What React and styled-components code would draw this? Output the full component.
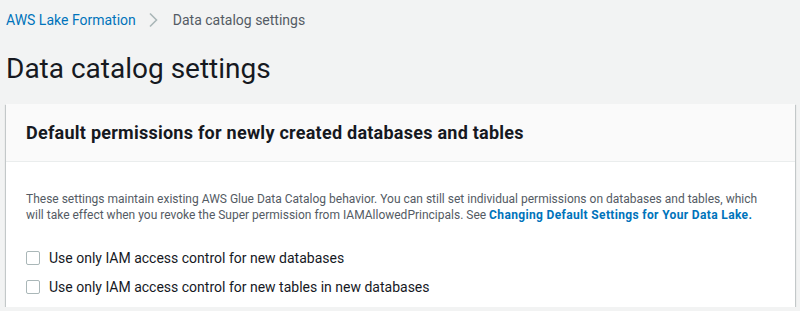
import styled, { createGlobalStyle } from "styled-components";

const GlobalStyle = createGlobalStyle`
  html, body {
    margin: 0;
    padding: 0;
    background: #f2f3f3;
    font-family: Roboto, "Noto Sans", Arial, sans-serif;
    color: #16191f;
  }
`;

export default function App() {
  return (
    <Page>
      <GlobalStyle />
      <Breadcrumbs>
        <CrumbLink href="#">AWS Lake Formation</CrumbLink>
        <Chevron viewBox="0 0 10 16" aria-hidden="true">
          <path d="M2 1.5 L8.5 8 L2 14.5" fill="none" stroke="#aab7b8" strokeWidth="1.6" />
        </Chevron>
        <CrumbCurrent>Data catalog settings</CrumbCurrent>
      </Breadcrumbs>
      <Title>Data catalog settings</Title>
      <Card>
        <CardHeader>
          <CardTitle>Default permissions for newly created databases and tables</CardTitle>
        </CardHeader>
        <CardBody>
          <Description>
            These settings maintain existing AWS Glue Data Catalog behavior. You can still set individual
            permissions on databases and tables, which will take effect when you revoke the Super permission
            from IAMAllowedPrincipals. See <DocLink href="#">Changing Default Settings for Your Data Lake.</DocLink>
          </Description>
          <Options>
            <Option>
              <Box type="checkbox" />
              <span>Use only IAM access control for new databases</span>
            </Option>
            <Option>
              <Box type="checkbox" />
              <span>Use only IAM access control for new tables in new databases</span>
            </Option>
          </Options>
        </CardBody>
      </Card>
    </Page>
  );
}

const Page = styled.div`
  padding: 8px 5px 0 6px;
`;

const Breadcrumbs = styled.nav`
  display: flex;
  align-items: center;
  height: 24px;
  font-size: 14px;
`;

const CrumbLink = styled.a`
  color: #0073bb;
  text-decoration: none;
`;

const Chevron = styled.svg`
  width: 10px;
  height: 16px;
  margin: 0 15px 0 12px;
`;

const CrumbCurrent = styled.span`
  color: #545b64;
`;

const Title = styled.h1`
  margin: 17px 0 0;
  font-size: 28px;
  font-weight: 400;
  line-height: 40px;
  color: #16191f;
`;

const Card = styled.section`
  margin-top: 15px;
  background: #fff;
  box-shadow: 0 1px 1px 0 rgba(0, 28, 36, 0.3), 1px 1px 1px 0 rgba(0, 28, 36, 0.15),
    -1px 1px 1px 0 rgba(0, 28, 36, 0.15);
`;

const CardHeader = styled.div`
  background: #fafafa;
  border-bottom: 1px solid #eaeded;
  height: 57px;
  display: flex;
  align-items: center;
  padding: 0 20px;
`;

const CardTitle = styled.h2`
  margin: 0;
  font-size: 18px;
  font-weight: 700;
  letter-spacing: 0.25px;
  color: #16191f;
`;

const CardBody = styled.div`
  padding: 29px 20px 10px;
`;

const Description = styled.p`
  margin: 0;
  font-size: 12px;
  line-height: 16px;
  color: #545b64;
`;

const DocLink = styled.a`
  color: #0073bb;
  font-weight: 700;
  letter-spacing: 0.35px;
  text-decoration: none;
`;

const Options = styled.div`
  margin-top: 25px;
  display: flex;
  flex-direction: column;
  gap: 9px;
`;

const Option = styled.label`
  display: flex;
  align-items: center;
  gap: 9px;
  font-size: 14px;
  line-height: 20px;
  color: #16191f;
`;

const Box = styled.input`
  appearance: none;
  margin: 0;
  width: 14px;
  height: 14px;
  border: 1px solid #aab7b8;
  border-radius: 2px;
  background: #fff;
`;
